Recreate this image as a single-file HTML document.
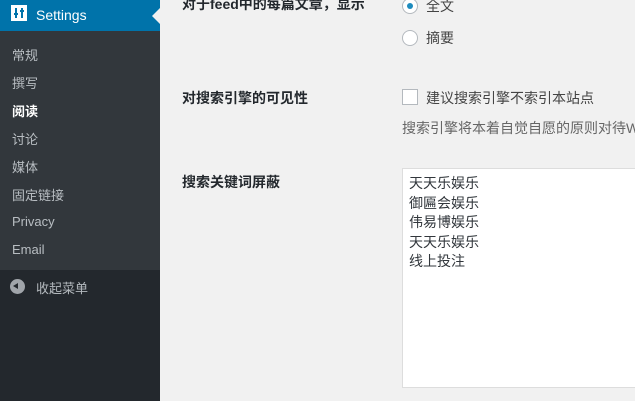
<!DOCTYPE html>
<html><head><meta charset="utf-8"><style>
*{margin:0;padding:0;box-sizing:border-box}
html,body{width:635px;height:401px;overflow:hidden}
body{background:#f1f1f1;font-family:"Liberation Sans","Noto Sans CJK SC",sans-serif;position:relative;color:#23282d}
#wrap{position:absolute;left:0;top:0;width:635px;height:401px;overflow:hidden}
#side{position:absolute;left:0;top:0;width:160px;height:401px;background:#23282d}
#hd{position:absolute;left:0;top:0;width:160px;height:31px;background:#0073aa;color:#fff;font-size:14px}
#hd .t{position:absolute;left:36px;top:7px}
#hd .ic{position:absolute;left:11px;top:5px;width:16px;height:16px;background:#fff}
#hd .arr{position:absolute;right:0;top:8px;width:0;height:0;border-top:8px solid transparent;border-bottom:8px solid transparent;border-right:8px solid #f1f1f1}
#menu{position:absolute;left:0;top:31px;width:160px;height:239px;background:#32373c}
.mi{position:absolute;left:12px;font-size:13px;color:rgba(240,245,250,.7)}
.mi.cur{color:#fff;font-weight:bold}
.col{position:absolute;left:36px;top:278px;font-size:13px;color:rgba(240,245,250,.7)}
.cc{position:absolute;left:10px;top:279px;width:15px;height:15px;border-radius:50%;background:#a0a5aa}
.cc:after{content:"";position:absolute;left:3px;top:4px;border-top:3.5px solid transparent;border-bottom:3.5px solid transparent;border-right:5px solid #23282d}
.lab{position:absolute;left:182px;font-size:14px;font-weight:bold;color:#23282d;white-space:nowrap}
.txt{position:absolute;font-size:14px;color:#444;white-space:nowrap}
.radio{position:absolute;left:402px;width:16px;height:16px;border-radius:50%;border:1px solid #b4b9be;background:#fff}
.radio.on:after{content:"";position:absolute;left:4px;top:4px;width:6px;height:6px;border-radius:50%;background:#1e8cbe}
.cb{position:absolute;left:402px;top:89px;width:16px;height:16px;border:1px solid #b4b9be;background:#fff}
.ta{position:absolute;left:402px;top:168px;width:233px;height:220px;border:1px solid #ddd;border-right:none;background:#fff;padding:5px 6px;font-size:14px;line-height:19.5px;color:#32373c}
</style></head><body><div id="wrap">
<div id="side">
<div id="hd"><div class="ic"><svg width="16" height="16" viewBox="0 0 16 16"><rect width="16" height="16" fill="#fff"/><path d="M5 3v10M11 3v10" stroke="#0073aa" stroke-width="2"/><path d="M3 9h4M9 6h4" stroke="#0073aa" stroke-width="2"/></svg></div><span class="t">Settings</span><div class="arr"></div></div>
<div id="menu">
<div class="mi" style="top:14px">常规</div>
<div class="mi" style="top:42px">撰写</div>
<div class="mi cur" style="top:70px">阅读</div>
<div class="mi" style="top:98px">讨论</div>
<div class="mi" style="top:126px">媒体</div>
<div class="mi" style="top:154px">固定链接</div>
<div class="mi" style="top:183px">Privacy</div>
<div class="mi" style="top:211px">Email</div>
</div>
<div class="cc"></div><div class="col">收起菜单</div>
</div>
<div class="lab" style="top:-6px">对于feed中的每篇文章，显示</div>
<div class="radio on" style="top:-2px"></div><div class="txt" style="left:426px;top:-4px">全文</div>
<div class="radio" style="top:30px"></div><div class="txt" style="left:426px;top:28px">摘要</div>
<div class="lab" style="top:88px">对搜索引擎的可见性</div>
<div class="cb"></div><div class="txt" style="left:426px;top:88px">建议搜索引擎不索引本站点</div>
<div class="txt" style="left:402px;top:118px;color:#666">搜索引擎将本着自觉自愿的原则对待WordPress</div>
<div class="lab" style="top:172px">搜索关键词屏蔽</div>
<div class="ta">天天乐娱乐<br>御匾会娱乐<br>伟易博娱乐<br>天天乐娱乐<br>线上投注</div>
</div></body></html>
